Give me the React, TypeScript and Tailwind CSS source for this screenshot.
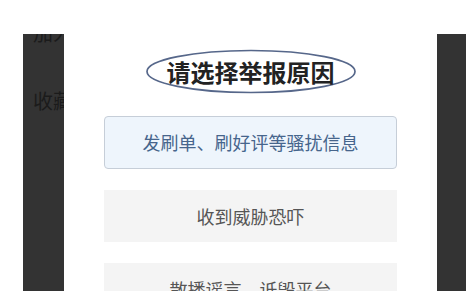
import React from 'react';

const cjk = { fontFamily: '"Noto Sans CJK SC", "Noto Sans", sans-serif' };

const reasons = ['收到威胁恐吓', '散播谣言、诋毁平台'];

const App: React.FC = () => {
  return (
    <div className="flex h-[291px] w-[466px] overflow-hidden bg-white" style={cjk}>
      <div className="w-[23px] shrink-0" />
      <div className="mt-[34px] w-[41px] shrink-0 overflow-hidden bg-[#333333] pl-[10px]">
        <div className="-mt-[13px] whitespace-nowrap text-[20px] leading-[24px] text-[#1b1b1b]">加入书架</div>
        <div className="mt-[44px] whitespace-nowrap text-[20px] leading-[24px] text-[#1b1b1b]">收藏本书</div>
      </div>

      <div className="flex w-[373px] shrink-0 flex-col items-center bg-white pt-[49px]">
        <div className="relative flex h-[45px] w-[212px] shrink-0 items-center justify-center">
          <svg className="absolute inset-0" width="212" height="45" viewBox="0 0 212 45">
            <ellipse cx="106" cy="22.5" rx="104" ry="21" fill="none" stroke="#56678a" strokeWidth="1.7" />
          </svg>
          <span className="relative text-[24px] font-bold leading-none text-[#222222]">请选择举报原因</span>
        </div>

        <div className="mt-[22px] flex w-[293px] shrink-0 flex-col gap-[21px]">
          <div className="flex h-[53px] shrink-0 items-center justify-center rounded-[4px] border border-[#c6ced8] bg-[#eef5fc] text-[18px] text-[#46658c]">
            发刷单、刷好评等骚扰信息
          </div>
          {reasons.map((r) => (
            <div key={r} className="flex h-[52px] shrink-0 items-center justify-center bg-[#f4f4f4] text-[18px] text-[#555555]">
              {r}
            </div>
          ))}
        </div>
      </div>

      <div className="mt-[34px] flex-1 bg-[#333333]" />
    </div>
  );
};

export default App;
